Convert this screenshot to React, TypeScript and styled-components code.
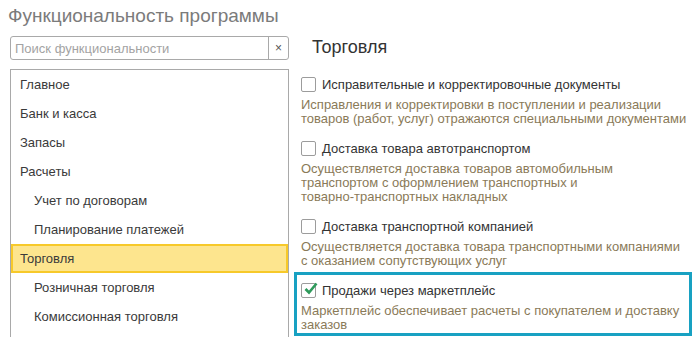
import React, { useState } from "react";
import styled, { createGlobalStyle } from "styled-components";

const GlobalStyle = createGlobalStyle`
  html, body {
    margin: 0;
    padding: 0;
    background: #ffffff;
    font-family: "Liberation Sans", Arial, sans-serif;
    overflow: hidden;
  }
`;

const Page = styled.div`
  width: 697px;
  height: 337px;
  box-sizing: border-box;
  padding: 5px 0 0 10px;
  overflow: hidden;
`;

const Title = styled.h1`
  margin: 0 0 9px -2px;
  font-size: 19px;
  line-height: 22px;
  font-weight: normal;
  color: #7b7b7b;
`;

const Columns = styled.div`
  display: grid;
  grid-template-columns: 279px 1fr;
  column-gap: 5px;
`;

const LeftPane = styled.div`
  display: flex;
  flex-direction: column;
  gap: 9px;
`;

const Search = styled.div`
  display: flex;
  height: 24px;
  box-sizing: border-box;
  border: 1px solid #a9a9a9;
  border-radius: 3px;
`;

const SearchInput = styled.input`
  flex: 1;
  min-width: 0;
  border: none;
  outline: none;
  padding: 0 4px;
  font-family: inherit;
  font-size: 13px;
  color: #333;
  background: transparent;

  &::placeholder {
    color: #a3a3a3;
  }
`;

const ClearButton = styled.button`
  width: 20px;
  border: none;
  border-left: 1px solid #a9a9a9;
  background: transparent;
  padding: 0;
  font-family: inherit;
  font-size: 12px;
  color: #555;
  cursor: pointer;
`;

const List = styled.div`
  border: 1px solid #a9a9a9;
  border-bottom: none;
  height: 300px;
`;

const ListRow = styled.div<{ $indent?: boolean; $active?: boolean }>`
  height: 29px;
  box-sizing: border-box;
  display: flex;
  align-items: center;
  padding-left: ${(p) => (p.$indent ? 23 : 9)}px;
  font-size: 13px;
  color: #3a3a3a;
  background: ${(p) => (p.$active ? "#fde58e" : "transparent")};
  border: 2px solid ${(p) => (p.$active ? "#f7c92a" : "transparent")};
  border-left-width: 0;
  ${(p) => (p.$active ? "border-left: 2px solid #f7c92a; padding-left: 7px;" : "")}
`;

const RightPane = styled.div`
  display: flex;
  flex-direction: column;
`;

const SectionTitle = styled.h2`
  margin: 0 0 8px 18px;
  font-size: 18px;
  line-height: 22px;
  font-weight: normal;
  color: #333;
`;

const Option = styled.div<{ $focused?: boolean }>`
  border: 3px solid ${(p) => (p.$focused ? "#18a1c2" : "transparent")};
  padding: 4px 4px 1px 4px;
  width: 398px;
  box-sizing: border-box;
`;

const OptionRow = styled.label`
  display: flex;
  align-items: center;
  height: 22px;
  gap: 6px;
  font-size: 13px;
  color: #333;
  cursor: pointer;
  white-space: nowrap;
`;

const Box = styled.span`
  width: 15px;
  height: 15px;
  box-sizing: border-box;
  border: 1px solid #9c9c9c;
  border-radius: 2px;
  background: #fff;
  display: flex;
  align-items: center;
  justify-content: center;
  flex: none;
`;

const Description = styled.div`
  margin-top: 3px;
  font-size: 13px;
  line-height: 14px;
  color: #8a7a58;
  white-space: nowrap;
`;

const Check = () => (
  <svg width="15" height="15" viewBox="0 0 15 15" style={{ marginTop: -3, marginRight: -3 }}>
    <path d="M2.5 8 L6 11.5 L13.5 2.5" fill="none" stroke="#2e9a5b" strokeWidth="2.6" />
  </svg>
);

const sections = [
  { label: "Главное" },
  { label: "Банк и касса" },
  { label: "Запасы" },
  { label: "Расчеты" },
  { label: "Учет по договорам", indent: true },
  { label: "Планирование платежей", indent: true },
  { label: "Торговля", active: true },
  { label: "Розничная торговля", indent: true },
  { label: "Комиссионная торговля", indent: true },
];

const options = [
  {
    label: "Исправительные и корректировочные документы",
    lines: [
      "Исправления и корректировки в поступлении и реализации",
      "товаров (работ, услуг) отражаются специальными документами",
    ],
    checked: false,
  },
  {
    label: "Доставка товара автотранспортом",
    lines: [
      "Осуществляется доставка товаров автомобильным",
      "транспортом с оформлением транспортных и",
      "товарно-транспортных накладных",
    ],
    checked: false,
  },
  {
    label: "Доставка транспортной компанией",
    lines: [
      "Осуществляется доставка товара транспортными компаниями",
      "с оказанием сопутствующих услуг",
    ],
    checked: false,
  },
  {
    label: "Продажи через маркетплейс",
    lines: [
      "Маркетплейс обеспечивает расчеты с покупателем и доставку",
      "заказов",
    ],
    checked: true,
    focused: true,
  },
];

const App: React.FC = () => {
  const [query, setQuery] = useState("");

  return (
    <Page>
      <GlobalStyle />
      <Title>Функциональность программы</Title>
      <Columns>
        <LeftPane>
          <Search>
            <SearchInput
              value={query}
              onChange={(e) => setQuery(e.target.value)}
              placeholder="Поиск функциональности"
            />
            <ClearButton onClick={() => setQuery("")}>×</ClearButton>
          </Search>
          <List>
            {sections.map((s) => (
              <ListRow key={s.label} $indent={s.indent} $active={s.active}>
                {s.label}
              </ListRow>
            ))}
          </List>
        </LeftPane>
        <RightPane>
          <SectionTitle>Торговля</SectionTitle>
          {options.map((o) => (
            <Option key={o.label} $focused={o.focused}>
              <OptionRow>
                <Box>{o.checked && <Check />}</Box>
                {o.label}
              </OptionRow>
              <Description>
                {o.lines.map((l) => (
                  <div key={l}>{l}</div>
                ))}
              </Description>
            </Option>
          ))}
        </RightPane>
      </Columns>
    </Page>
  );
};

export default App;
